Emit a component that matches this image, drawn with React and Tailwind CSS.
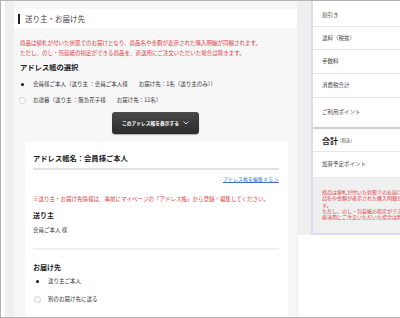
import React from "react";

const Radio = ({ checked }) =>
  checked ? (
    <span className="flex h-[7px] w-[7px] items-center justify-center">
      <span className="h-[3px] w-[3px] rounded-full bg-[#111]" />
    </span>
  ) : (
    <span className="h-[7px] w-[7px] rounded-full border border-[#d0d0d0] bg-white" />
  );

const SideRow = ({ children, className }) => (
  <div className={"flex items-center border-b border-[#e6e6ee] pl-[9px] text-[5.5px] text-[#444] " + className}>
    {children}
  </div>
);

const App = () => {
  return (
    <div className="flex h-[318px] w-[400px] overflow-hidden border-t border-b border-l border-[#b4b4b4] bg-white font-['Noto_Sans_CJK_JP',sans-serif] text-[#333]">
      <div className="w-[4px] shrink-0 bg-white" />
      {/* left frame */}
      <div className="w-[293px] shrink-0 bg-[#efefef] pl-[9px] pr-[1px]">
        <div className="flex h-full flex-col bg-[#f7f7f7]">
          <div className="mt-[8px] flex h-[19px] items-center bg-white">
            <span className="ml-[4px] h-[10px] w-[2px] bg-[#222]" />
            <span className="ml-[5px] text-[7.5px] leading-none text-[#444]">送り主・お届け先</span>
          </div>

          <div className="ml-[6px] mt-[10px] text-[5.5px] leading-[10px] text-[#e0393e]">
            <p>商品は値札が付いた状態でのお届けとなり、商品名や金額が表示された購入明細が同梱されます。</p>
            <p>ただし、のし・包装紙の指定ができる商品を、直送用にご注文いただいた場合は除きます。</p>
          </div>

          <h2 className="ml-[6px] mt-[4px] text-[7.3px] font-bold leading-[10px] text-[#222]">アドレス帳の選択</h2>

          <div className="ml-[5px] mt-[7px] flex flex-col gap-[6px] text-[5.5px] leading-[10px]">
            <label className="flex items-center">
              <Radio checked />
              <span className="ml-[7px]">会員様ご本人（送り主 ：会員ご本人様　　お届け先：1名（送り主のみ））</span>
            </label>
            <label className="flex items-center">
              <Radio />
              <span className="ml-[7px]">お歳暮（送り主 ：阪急花子様　　お届け先：11名）</span>
            </label>
          </div>

          <div className="mt-[7px] flex justify-center">
            <button className="flex h-[22px] w-[87px] items-center justify-center gap-[4px] rounded-[3px] bg-gradient-to-b from-[#4a4a4a] to-[#2b2b2b] text-[4.75px] font-bold text-white shadow-[0_1px_1px_rgba(0,0,0,0.3)]">
              このアドレス帳を表示する
              <svg width="6" height="4" viewBox="0 0 6 4" fill="none" stroke="white" strokeWidth="0.8">
                <path d="M0.5 0.5 L3 3 L5.5 0.5" />
              </svg>
            </button>
          </div>

          <div className="ml-[11px] mt-[8px] flex w-[263px] flex-1 flex-col bg-white px-[8px] pt-[11px]">
            <h3 className="text-[7.3px] font-bold leading-[10px] text-[#222]">アドレス帳名：会員様ご本人</h3>
            <div className="mt-[5px] h-[2px] w-[246px] bg-[#e2e2e2]" />
            <div className="mt-[5px] flex w-[246px] justify-end">
              <a className="text-[5px] leading-[7px] text-[#3a6fd0] underline">アドレス帳を編集する ＞</a>
            </div>
            <p className="mt-[13px] text-[5.5px] leading-[8px] text-[#e0393e]">
              ※送り主・お届け先情報は、事前にマイページの「アドレス帳」から登録・編集してください。
            </p>
            <h4 className="mt-[7px] text-[7px] font-bold leading-[10px] text-[#222]">送り主</h4>
            <p className="mt-[6px] text-[5.5px] leading-[8px]">会員ご本人 様</p>
            <div className="mt-[14px] h-[2px] w-[246px] bg-[#efefef]" />
            <h4 className="mt-[12px] text-[7px] font-bold leading-[10px] text-[#222]">お届け先</h4>
            <div className="mt-[4px] flex flex-col gap-[8px] text-[5.5px] leading-[10px]">
              <label className="flex items-center pl-[1px]">
                <Radio checked />
                <span className="ml-[7px]">送り主ご本人</span>
              </label>
              <label className="flex items-center pl-[1px]">
                <Radio />
                <span className="ml-[7px]">別のお届け先に送る</span>
              </label>
            </div>
          </div>
        </div>
      </div>

      {/* right column */}
      <div className="flex-1">
        <div className="bg-[#efefef] pl-[13px]">
          <div className="w-[130px] border-b-2 border-l-2 border-[#dcdcee] bg-white">
            <SideRow className="h-[26px] pt-[4px]">割引き</SideRow>
            <SideRow className="h-[23px]">送料（税抜）</SideRow>
            <SideRow className="h-[24px]">手数料</SideRow>
            <SideRow className="h-[24px]">消費税合計</SideRow>
            <div className="flex h-[31px] items-center border-b-2 border-[#cfcfcf] pl-[9px] text-[5.5px] text-[#444]">ご利用ポイント</div>
            <SideRow className="h-[23px] pt-[1px]">
              <span className="text-[8px] font-bold text-[#222]">合計</span>
              <span className="ml-[2px] text-[4.5px] text-[#555]">(税込)</span>
            </SideRow>
            <SideRow className="h-[26px]">加算予定ポイント</SideRow>
            <div className="bg-[#f0f0f0] pb-[13px] pl-[9px] pt-[11px] text-[5px] leading-[6.3px] text-[#e0393e]">
              <p className="whitespace-nowrap">商品は値札が付いた状態でのお届けとなり、商</p>
              <p className="whitespace-nowrap">品名や金額が表示された購入明細が同梱されま</p>
              <p className="whitespace-nowrap">す。</p>
              <p className="whitespace-nowrap">ただし、のし・包装紙の指定ができる商品を、</p>
              <p className="whitespace-nowrap">直送用にご注文いただいた場合は除きます。</p>
            </div>
          </div>
        </div>
      </div>
    </div>
  );
};

export default App;
